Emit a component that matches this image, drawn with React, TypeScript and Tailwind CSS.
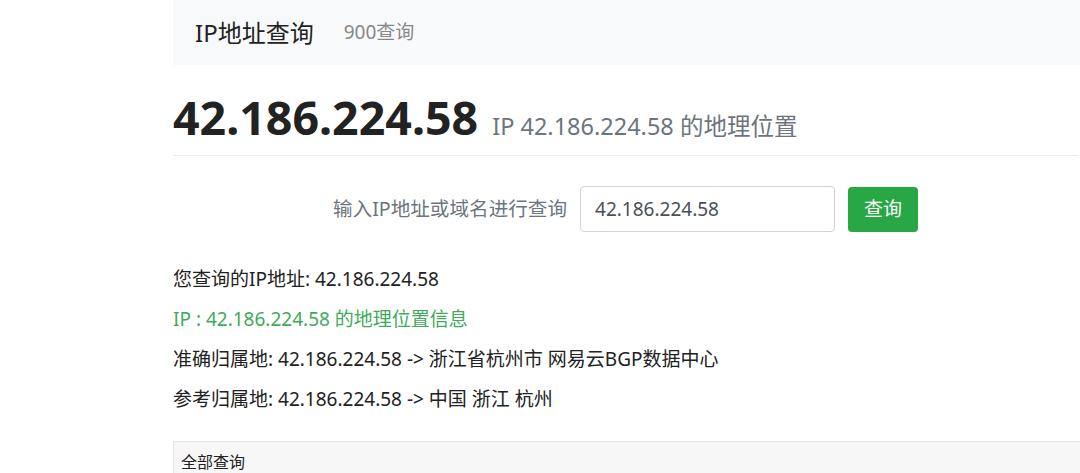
import React from 'react';

const font = { fontFamily: '"Noto Sans", "Noto Sans CJK SC", sans-serif' };

export default function App() {
  const [ip, setIp] = React.useState('42.186.224.58');

  return (
    <div className="w-[1080px] h-[473px] overflow-hidden bg-white text-[#212529]" style={font}>
      <div className="ml-[173px] flex flex-col">
        {/* Navbar */}
        <div className="h-[65px] bg-[#f8f9fa] flex items-center pl-[22px]">
          <span className="text-[24px] text-[#222]">IP地址查询</span>
          <span className="ml-[30px] text-[19px] text-[#888]">900查询</span>
        </div>

        {/* Heading */}
        <div className="flex items-baseline gap-[14px] h-[91px] pt-[22px] border-b border-[#e9ecef] mr-[2px]">
          <h1 className="text-[46.5px] leading-[60px] font-bold text-[#222]">42.186.224.58</h1>
          <span className="text-[23.5px] text-[#6c757d]">IP 42.186.224.58 的地理位置</span>
        </div>

        {/* Query form */}
        <div className="flex items-center justify-center gap-[13px] mt-[30px] h-[46px] pr-[2px]">
          <label className="text-[19.6px] text-[#6c757d]">输入IP地址或域名进行查询</label>
          <input
            className="w-[255px] h-[46px] px-[14px] text-[19px] text-[#495057] border border-[#ced4da] rounded-[4px] outline-none"
            value={ip}
            onChange={(e) => setIp(e.target.value)}
          />
          <button className="w-[70px] h-[45px] bg-[#28a745] text-white text-[19px] rounded-[4px]">查询</button>
        </div>

        {/* Results */}
        <div className="flex flex-col mt-[27px] text-[19px] leading-[40px]">
          <p className="text-[#222]">您查询的IP地址: 42.186.224.58</p>
          <p className="text-[#3fab5a]">IP : 42.186.224.58 的地理位置信息</p>
          <p className="text-[#222]">准确归属地: 42.186.224.58 -&gt; 浙江省杭州市 网易云BGP数据中心</p>
          <p className="text-[#222]">参考归属地: 42.186.224.58 -&gt; 中国 浙江 杭州</p>
        </div>

        {/* Card header */}
        <div className="mt-[22px] h-[40px] bg-[#f7f7f7] border-t border-l border-[#e5e5e5] pl-[7px] pt-[8px] text-[16px] text-[#222]">
          全部查询
        </div>
      </div>
    </div>
  );
}
